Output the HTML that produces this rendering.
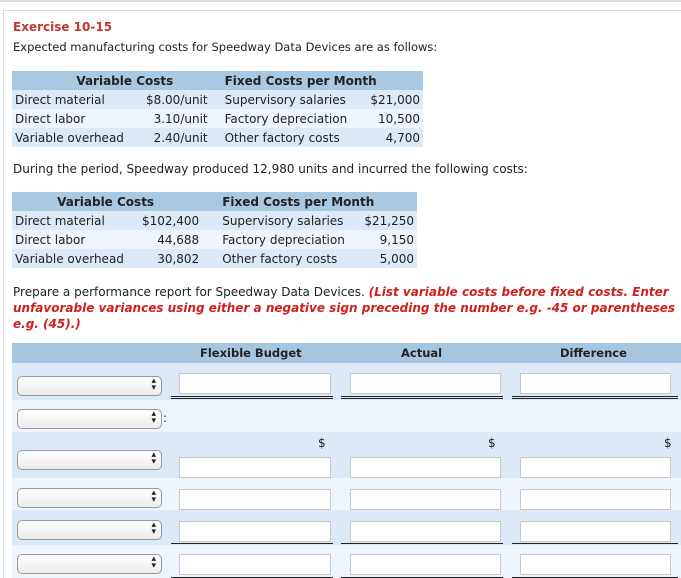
<!DOCTYPE html>
<html><head><meta charset="utf-8"><style>
*{margin:0;padding:0;box-sizing:border-box}
html,body{width:681px;height:578px;overflow:hidden}
body{background:#fff;font-family:"DejaVu Sans",Verdana,sans-serif;font-size:12px;color:#222;position:relative}
.frame{position:absolute;left:0;top:0;width:681px;height:2px;background:#d6dde6}
.card{position:absolute;left:3px;top:10px;width:678px;height:568px;border-left:1px solid #d3dbe4;border-top:1px solid #d3dbe4}
.a{position:absolute;white-space:nowrap}
h1{position:absolute;left:13px;top:20px;font-size:12px;font-weight:bold;color:#c0392b}
table.c{position:absolute;border-collapse:collapse;font-size:12px}
table.c td,table.c th{height:19px;padding:0 3px;white-space:nowrap}
table.c th{background:#a9c8e1;font-weight:bold}
table.c tr:nth-child(even) td{background:#dde9f6}
table.c tr:nth-child(odd) td{background:#edf4fb}
.r{text-align:right}
.red{color:#d0201e;font-weight:bold;font-style:italic}
.band{position:absolute;left:12px;width:669px}
.sel{position:absolute;left:17px;width:145px;height:20px;border:1px solid #9a9a9a;border-radius:5px;background:linear-gradient(#fff,#ececec)}
.sel:after{content:"▴";position:absolute;right:5px;top:-1px;font-size:9px;color:#222}
.sel:before{content:"▾";position:absolute;right:5px;top:6px;font-size:9px;color:#222}
.in{position:absolute;height:21px;border:1px solid #c8c8c8;background:#fff}
.u{position:absolute;height:1px;background:#222}
</style></head><body>
<div class="frame"></div>
<div class="card"></div>
<h1>Exercise 10-15</h1>
<div class="a" style="left:13px;top:40px;font-size:11.5px">Expected manufacturing costs for Speedway Data Devices are as follows:</div>
<table class="c" style="left:12px;top:71px;width:411px">
<tr><th colspan="2" style="text-align:center;padding-left:30px">Variable Costs</th><th colspan="2" style="text-align:left;padding-left:14px">Fixed Costs per Month</th></tr>
<tr><td>Direct material</td><td class="r">$8.00/unit</td><td style="padding-left:14px">Supervisory salaries</td><td class="r">$21,000</td></tr>
<tr><td>Direct labor</td><td class="r">3.10/unit</td><td style="padding-left:14px">Factory depreciation</td><td class="r">10,500</td></tr>
<tr><td>Variable overhead</td><td class="r">2.40/unit</td><td style="padding-left:14px">Other factory costs</td><td class="r">4,700</td></tr>
</table>
<div class="a" style="left:13px;top:162px">During the period, Speedway produced 12,980 units and incurred the following costs:</div>
<table class="c" style="left:12px;top:192px;width:405px">
<tr><th colspan="2" style="text-align:center;padding-left:0px">Variable Costs</th><th colspan="2" style="text-align:left;padding-left:20px">Fixed Costs per Month</th></tr>
<tr><td>Direct material</td><td class="r">$102,400</td><td style="padding-left:20px">Supervisory salaries</td><td class="r">$21,250</td></tr>
<tr><td>Direct labor</td><td class="r">44,688</td><td style="padding-left:20px">Factory depreciation</td><td class="r">9,150</td></tr>
<tr><td>Variable overhead</td><td class="r">30,802</td><td style="padding-left:20px">Other factory costs</td><td class="r">5,000</td></tr>
</table>
<div class="a" style="left:13px;top:284px;line-height:16px;white-space:normal;width:665px">Prepare a performance report for Speedway Data Devices. <span class="red">(List variable costs before fixed costs. Enter unfavorable variances using either a negative sign preceding the number e.g. -45 or parentheses e.g. (45).)</span></div>

<div class="band" style="top:343px;height:20px;background:#a6c6e0;font-weight:bold;font-size:11.5px">
<span class="a" style="left:188px;top:3px">Flexible Budget</span>
<span class="a" style="left:389px;top:3px">Actual</span>
<span class="a" style="left:548px;top:3px">Difference</span>
</div>
<div class="band" style="top:363px;height:37px;background:#dde9f6"></div>
<div class="band" style="top:400px;height:32px;background:#eef5fc"></div>
<div class="band" style="top:432px;height:46px;background:#dde9f6"></div>
<div class="band" style="top:478px;height:32px;background:#eef5fc"></div>
<div class="band" style="top:510px;height:35px;background:#dde9f6"></div>
<div class="band" style="top:545px;height:33px;background:#eef5fc"></div>

<div class="sel" style="top:376px"></div>
<div class="in" style="left:179px;top:373px;width:152px"></div>
<div class="in" style="left:350px;top:373px;width:151px"></div>
<div class="in" style="left:520px;top:373px;width:151px"></div>
<div class="u" style="left:171px;top:396px;width:162px"></div><div class="u" style="left:171px;top:398px;width:162px"></div>
<div class="u" style="left:341px;top:396px;width:162px"></div><div class="u" style="left:341px;top:398px;width:162px"></div>
<div class="u" style="left:512px;top:396px;width:166px"></div><div class="u" style="left:512px;top:398px;width:166px"></div>

<div class="sel" style="top:409px"></div><div class="a" style="left:163px;top:411px">:</div>

<div class="a" style="left:318px;top:436px">$</div>
<div class="a" style="left:488px;top:436px">$</div>
<div class="a" style="left:664px;top:436px">$</div>
<div class="sel" style="top:450px"></div>
<div class="in" style="left:179px;top:457px;width:152px"></div>
<div class="in" style="left:350px;top:457px;width:151px"></div>
<div class="in" style="left:520px;top:457px;width:151px"></div>

<div class="sel" style="top:488px"></div>
<div class="in" style="left:179px;top:489px;width:152px"></div>
<div class="in" style="left:350px;top:489px;width:151px"></div>
<div class="in" style="left:520px;top:489px;width:151px"></div>

<div class="sel" style="top:520px"></div>
<div class="in" style="left:179px;top:521px;width:152px"></div>
<div class="in" style="left:350px;top:521px;width:151px"></div>
<div class="in" style="left:520px;top:521px;width:151px"></div>
<div class="u" style="left:171px;top:543px;width:162px"></div>
<div class="u" style="left:341px;top:543px;width:162px"></div>
<div class="u" style="left:512px;top:543px;width:166px"></div>

<div class="sel" style="top:554px"></div>
<div class="in" style="left:179px;top:554px;width:152px"></div>
<div class="in" style="left:350px;top:554px;width:151px"></div>
<div class="in" style="left:520px;top:554px;width:151px"></div>
<div class="u" style="left:171px;top:577px;width:162px"></div>
<div class="u" style="left:341px;top:577px;width:162px"></div>
<div class="u" style="left:512px;top:577px;width:166px"></div>
</body></html>
